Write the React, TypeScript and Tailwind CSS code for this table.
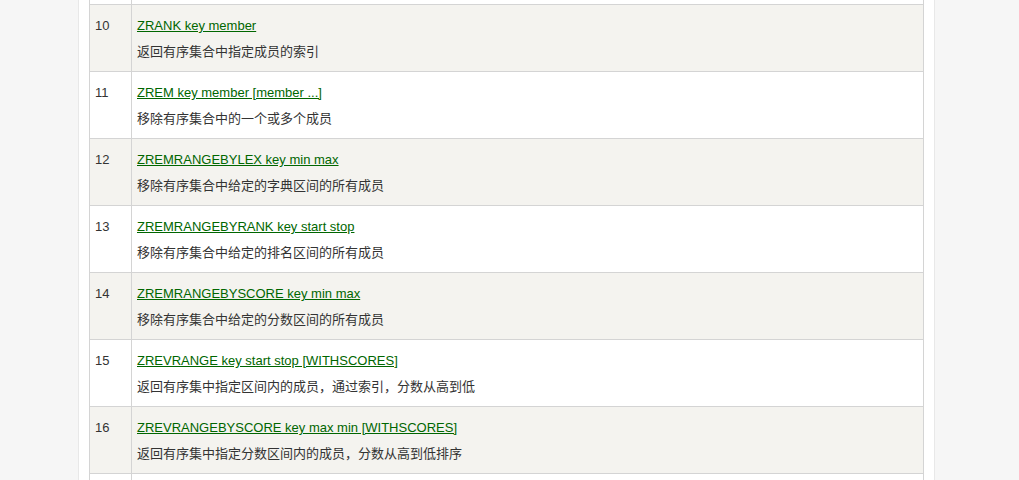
const rows = [
  { n: 10, cmd: 'ZRANK key member', desc: '返回有序集合中指定成员的索引' },
  { n: 11, cmd: 'ZREM key member [member ...]', desc: '移除有序集合中的一个或多个成员' },
  { n: 12, cmd: 'ZREMRANGEBYLEX key min max', desc: '移除有序集合中给定的字典区间的所有成员' },
  { n: 13, cmd: 'ZREMRANGEBYRANK key start stop', desc: '移除有序集合中给定的排名区间的所有成员' },
  { n: 14, cmd: 'ZREMRANGEBYSCORE key min max', desc: '移除有序集合中给定的分数区间的所有成员' },
  { n: 15, cmd: 'ZREVRANGE key start stop [WITHSCORES]', desc: '返回有序集中指定区间内的成员，通过索引，分数从高到低' },
  { n: 16, cmd: 'ZREVRANGEBYSCORE key max min [WITHSCORES]', desc: '返回有序集中指定分数区间内的成员，分数从高到低排序' },
];

export default function App() {
  return (
    <div
      className="h-[480px] overflow-hidden bg-[#f6f6f6] text-[13px] text-[#333]"
      style={{ fontFamily: '"Liberation Sans", Arial, "Noto Sans CJK SC", sans-serif' }}
    >
      <div className="ml-[78px] w-[857px] h-full bg-white border-x border-[#e8e8e8] px-[10px]">
        <div className="border-x border-[#d4d4d4]">
          {/* tail of the previous row */}
          <div className="flex h-[5px] border-b border-[#d4d4d4]">
            <div className="w-[42px] border-r border-[#d4d4d4]" />
            <div className="flex-1" />
          </div>
          {rows.map((r, i) => (
            <div
              key={r.n}
              className={`flex border-b border-[#d4d4d4] ${i % 2 === 0 ? 'bg-[#f4f3ef]' : 'bg-white'}`}
            >
              <div className="w-[42px] shrink-0 border-r border-[#d4d4d4] pl-[5px] pt-[8px] leading-[26px]">
                {r.n}
              </div>
              <div className="flex-1 pl-[5px] pt-[8px] pb-[6px] leading-[26px]">
                <div>
                  <a href="#" className="text-[#006600] underline">
                    {r.cmd}
                  </a>
                </div>
                <div>{r.desc}</div>
              </div>
            </div>
          ))}
          {/* start of the next row */}
          <div className="flex h-[20px]">
            <div className="w-[42px] border-r border-[#d4d4d4]" />
            <div className="flex-1" />
          </div>
        </div>
      </div>
    </div>
  );
}
